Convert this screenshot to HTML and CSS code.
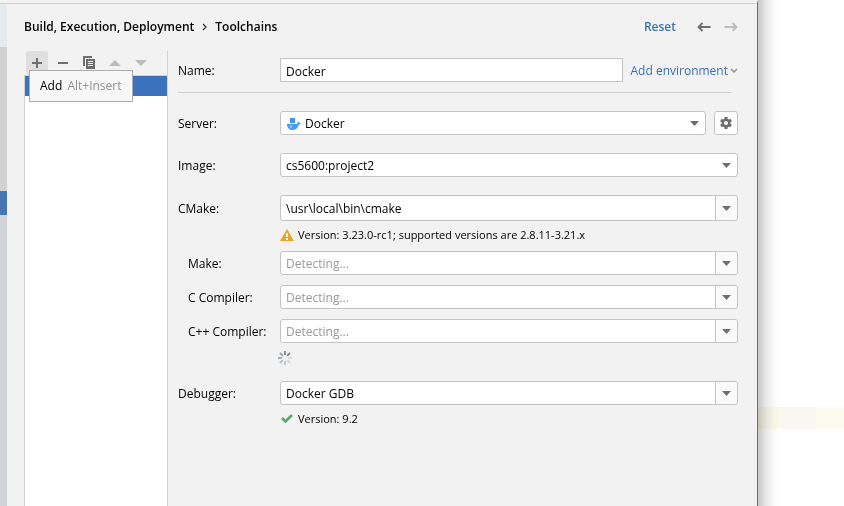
FILE: index.html
```html
<!DOCTYPE html>
<html lang="en">
<head>
<meta charset="utf-8">
<title>Toolchains</title>
<link rel="stylesheet" href="styles.css">
</head>
<body>
<svg class="defs" aria-hidden="true">
  <symbol id="caret" viewBox="0 0 9 5"><path d="M0 0h9L4.500 5z" fill="#6e6e6e"/></symbol>
</svg>
<div class="screen">
  <div class="strip"><div class="strip-top"></div><div class="strip-mid"></div><div class="strip-selected"></div><div class="strip-rest"></div></div>
  <main class="dialog">
    <header class="header">
      <h1 class="crumbs"><span>Build, Execution, Deployment</span>
        <svg width="5" height="8" viewBox="0 0 5 8"><path d="M1 1l3 3-3 3" fill="none" stroke="#333" stroke-width="1.200"/></svg>
        <span>Toolchains</span></h1>
      <a class="reset" href="#">Reset</a>
      <button class="nav" aria-label="Back"><svg width="14" height="10" viewBox="0 0 14 10"><path d="M13.500 5H1.500M5.500 1l-4 4 4 4" fill="none" stroke="#6e6e6e" stroke-width="1.800"/></svg></button>
      <button class="nav" aria-label="Forward" disabled><svg width="14" height="10" viewBox="0 0 14 10"><path d="M.5 5h12M8.500 1l4 4-4 4" fill="none" stroke="#bcbcbc" stroke-width="1.800"/></svg></button>
    </header>
    <div class="body">
      <section class="side">
        <div class="toolbar">
          <button class="tool hover" aria-label="Add"><svg width="16" height="16" viewBox="0 0 16 16"><path d="M3 8h10M8 3v10" stroke="#6e6e6e" stroke-width="2"/></svg></button>
          <button class="tool" aria-label="Remove"><svg width="16" height="16" viewBox="0 0 16 16"><path d="M3 8h10" stroke="#6e6e6e" stroke-width="2"/></svg></button>
          <button class="tool" aria-label="Copy"><svg width="16" height="16" viewBox="0 0 16 16"><path d="M3 11V2h8" fill="none" stroke="#6e6e6e" stroke-width="2"/><path d="M5 4h9v10H5z" fill="#6e6e6e"/><path d="M7 6.500h5M7 8.500h5M7 10.500h5" stroke="#f2f2f2"/></svg></button>
          <button class="tool" aria-label="Up" disabled><svg width="16" height="16" viewBox="0 0 16 16"><path d="M2 11h12L8 5z" fill="#bcbcbc"/></svg></button>
          <button class="tool" aria-label="Down" disabled><svg width="16" height="16" viewBox="0 0 16 16"><path d="M2 5h12l-6 6z" fill="#bcbcbc"/></svg></button>
        </div>
        <div class="list"><div class="selected"></div></div>
        <div class="tooltip" role="tooltip">Add <span>Alt+Insert</span></div>
      </section>
      <form class="form">
        <div class="row">
          <label for="name">Name:</label>
          <input class="field name" id="name" value="Docker">
          <a class="env" href="#">Add environment <svg width="8" height="6" viewBox="0 0 8 6"><path d="M1 1l3 3 3-3" fill="none" stroke="#8c9299" stroke-width="1.500"/></svg></a>
        </div>
        <hr>
        <div class="row">
          <label for="server">Server:</label>
          <div class="combo with-icon">
            <select class="field" id="server"><option>Docker</option></select>
            <svg class="whale" width="16" height="14" viewBox="0 0 16 14"><path d="M4 1h5v5H4z" fill="#3f94ea"/><path d="M1 7h10.500V4.500L15 6.500l-2.500 1.600C12 11 10 13 7 13c-3.500 0-6-2-6-6z" fill="#4a9bed"/><circle cx="5" cy="9.500" r="1" fill="none" stroke="#b5d8fb" stroke-width=".8"/></svg>
            <svg class="arrow" width="9" height="5"><use href="#caret"/></svg>
          </div>
          <button type="button" class="gear" aria-label="Server settings"><svg width="14" height="14" viewBox="0 0 14 14"><path d="M7 1v12M1.800 4l10.400 6M1.800 10l10.400-6" stroke="#6e6e6e" stroke-width="3"/><circle cx="7" cy="7" r="4.500" fill="#6e6e6e"/><circle cx="7" cy="7" r="2" fill="#fff"/></svg></button>
        </div>
        <div class="row">
          <label for="image">Image:</label>
          <div class="combo"><select class="field" id="image"><option>cs5600:project2</option></select><svg class="arrow" width="9" height="5"><use href="#caret"/></svg></div>
        </div>
        <div class="row">
          <label for="cmake">CMake:</label>
          <div class="edit tall"><input id="cmake" value="\usr\local\bin\cmake"><button type="button" aria-label="CMake choices"><svg width="9" height="5"><use href="#caret"/></svg></button></div>
        </div>
        <p class="hint"><svg width="14" height="12" viewBox="0 0 14 12"><path d="M7 0l7 12H0z" fill="#e5a52d"/><path d="M7 4v4M7 9v2" stroke="#fff" stroke-width="1.800"/></svg>Version: 3.23.0-rc1; supported versions are 2.8.11-3.21.x</p>
        <div class="row sub first">
          <label for="make">Make:</label>
          <div class="edit"><input id="make" placeholder="Detecting..."><button type="button" aria-label="Make choices"><svg width="9" height="5"><use href="#caret"/></svg></button></div>
        </div>
        <div class="row sub">
          <label for="cc">C Compiler:</label>
          <div class="edit"><input id="cc" placeholder="Detecting..."><button type="button" aria-label="C compiler choices"><svg width="9" height="5"><use href="#caret"/></svg></button></div>
        </div>
        <div class="row sub">
          <label for="cxx">C++ Compiler:</label>
          <div class="edit"><input id="cxx" placeholder="Detecting..."><button type="button" aria-label="C++ compiler choices"><svg width="9" height="5"><use href="#caret"/></svg></button></div>
        </div>
        <div class="progress"><svg width="14" height="14" viewBox="-7 -7 14 14" stroke-width="2"><path d="M0-3v-4" stroke="#90969c"/><path d="M2.100-2.100l2.900-2.900" stroke="#858b91"/><path d="M3 0h4" stroke="#d5d9dc"/><path d="M2.100 2.100l2.900 2.900" stroke="#d0d4d7"/><path d="M0 3v4" stroke="#c3c7cb"/><path d="M-2.100 2.100l-2.900 2.900" stroke="#b7bcc0"/><path d="M-3 0h-4" stroke="#a9aeb4"/><path d="M-2.100-2.100l-2.900-2.900" stroke="#9ea4a9"/></svg></div>
        <div class="row debugger">
          <label for="debugger">Debugger:</label>
          <div class="edit"><input id="debugger" value="Docker GDB"><button type="button" aria-label="Debugger choices"><svg width="9" height="5"><use href="#caret"/></svg></button></div>
        </div>
        <p class="hint"><svg width="14" height="12" viewBox="0 0 14 12"><path d="M2 5l3.500 3.500L12 2" fill="none" stroke="#59a869" stroke-width="2.600"/></svg>Version: 9.2</p>
      </form>
    </div>
  </main>
  <aside class="editor"><div class="line"><i></i><i class="pink"></i><i></i></div></aside>
</div>
</body>
</html>
```
FILE: styles.css
```css
* { box-sizing: border-box; }
body {
  margin: 0;
  font: 12px/16px "Open Sans", "Noto Sans", sans-serif;
  color: #000;
  background: #fff;
}
button, input, select { font: inherit; color: inherit; margin: 0; padding: 0; border: 0; background: none; }
button { display: flex; align-items: center; justify-content: center; }
a { color: #3b70b3; text-decoration: none; }
.defs { display: none; }
.screen { display: grid; grid-template-columns: 7px 1fr 86px; min-height: 100vh; overflow: hidden; }

.strip { display: flex; flex-direction: column; border-top: 3px solid #f2f2f2; }
.strip-top { height: 44px; background: #e6ebf0; border-top: 1px solid #d1d1d1; }
.strip-mid { height: 144px; background: #d2d2d2; }
.strip-selected { height: 24px; background: #4675b3; }
.strip-rest { flex: 1; background: #d0d4da; }

.dialog {
  display: flex;
  flex-direction: column;
  background: #f2f2f2;
  border-top: 3px solid #f2f2f2;
  border-right: 1px solid #6e6e6e;
}
.header {
  display: flex;
  align-items: center;
  height: 48px;
  padding: 0 19px 2px 17px;
  border-top: 1px solid #d1d1d1;
}
.crumbs { display: flex; align-items: center; gap: 8px; flex: 1; margin: 0; font-size: 12px; font-weight: 600; }
.reset { font-weight: 600; margin-right: 21px; }
.nav { width: 14px; height: 16px; }
.nav + .nav { margin-left: 13px; }

.body { display: flex; flex: 1; }
.side { position: relative; display: flex; flex-direction: column; width: 144px; margin-left: 17px; border-right: 1px solid #d1d1d1; }
.toolbar { display: flex; gap: 4px; height: 24px; padding-left: 2px; }
.tool { width: 22px; height: 24px; border-radius: 3px; }
.tool.hover { background: #dfdfdf; }
.list { flex: 1; background: #fff; border: solid #d1d1d1; border-width: 1px 0 0 1px; }
.selected { height: 20px; background: #3a72bd; }
.tooltip {
  position: absolute;
  left: 5px;
  top: 19px;
  padding: 7px 10px;
  white-space: nowrap;
  background: #f7f7f7;
  border: 1px solid #adadad;
}
.tooltip span { margin-left: 2px; color: #919191; }

.form { flex: 1; padding: 7px 19px 0 10px; }
.row { display: flex; align-items: center; margin-top: 18px; }
.row:first-child { margin-top: 0; }
.row label { width: 102px; flex: none; padding-top: 2px; white-space: nowrap; }
.sub { margin-top: 10px; }
.sub.first { margin-top: 2px; }
.row.sub label { padding-left: 10px; }
hr { height: 1px; margin: 10px 7px 0 0; border: 0; background: #d1d1d1; }
.field { width: 100%; height: 24px; padding: 2px 5px 0; background: #fff; border: 1px solid #c4c4c4; }
.name { flex: 1; min-width: 0; }
.env { display: flex; align-items: center; gap: 2px; margin-left: 8px; padding-top: 2px; white-space: nowrap; }
.combo { position: relative; flex: 1; }
.combo .field { display: block; appearance: none; border-radius: 3px; }
.with-icon .field { padding-left: 24px; }
.whale { position: absolute; left: 6px; top: 6px; }
.arrow { position: absolute; right: 7px; top: 10px; }
.gear { width: 24px; height: 24px; margin-left: 8px; background: #fff; border: 1px solid #c4c4c4; border-radius: 3px; }
.edit { display: flex; flex: 1; height: 24px; background: #fff; border: 1px solid #c4c4c4; border-radius: 3px; overflow: hidden; }
.edit.tall { height: 26px; }
.edit input { flex: 1; min-width: 0; padding: 2px 5px 0; }
.edit input::placeholder { color: #999; opacity: 1; }
.edit button { width: 22px; background: #fafafa; border-left: 1px solid #c4c4c4; }
.hint { display: flex; align-items: center; gap: 4px; height: 28px; margin: 0 0 0 102px; font-size: 11px; }
.progress { display: flex; align-items: center; height: 30px; margin-left: 100px; }
.debugger { margin-top: 8px; }

.editor { padding-top: 407px; background: linear-gradient(90deg, #c8c8c8, #e8e8e8 8px, #fafafa 16px, #fff 24px); }
.line { display: grid; grid-template-columns: 23px 35px 1fr; height: 22px; mix-blend-mode: multiply; }
.line i { background: #fcfaed; }
.line .pink { background: #faf6f2; }
```
